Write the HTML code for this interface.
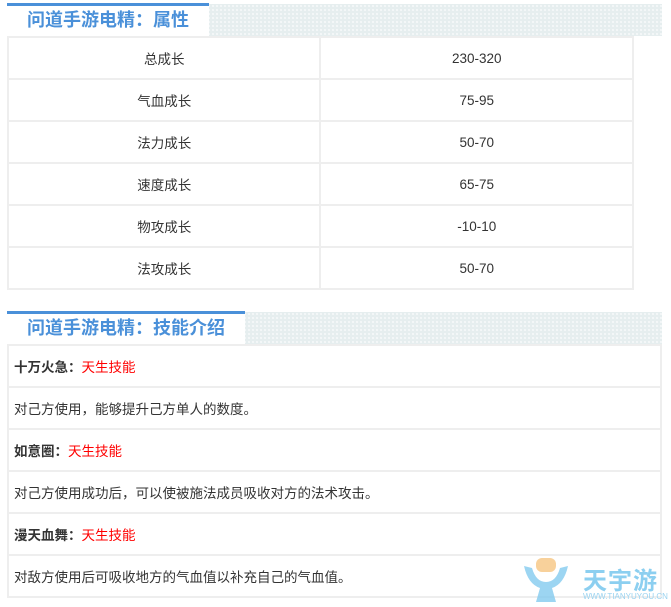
<!DOCTYPE html><html><head><meta charset="utf-8"><style>
body{margin:0;background:#fff;font-family:"Liberation Sans","Noto Sans CJK SC",sans-serif;width:671px;height:604px;overflow:hidden;position:relative}
.band{position:absolute;left:7px;width:655px;height:32px;background-color:#e6eeef;background-image:radial-gradient(circle,#fff 0.7px,transparent 0.9px);background-size:4px 4px}
.tab{position:absolute;left:0;top:-1px;height:33px;background:#fff;border-top:3px solid #4a90d9;box-sizing:border-box;color:#4a90d9;font-weight:bold;font-size:18px;line-height:28px;padding-left:20px}
table{position:absolute;left:7px;border-collapse:collapse;font-size:13.5px;color:#333}
td{border:2px solid #eee;height:40px;padding:0}
.t1 td{text-align:center;width:313px}
.t2 td{padding-left:5px}
b{font-weight:bold}
.r{color:#f00}
</style></head><body>
<div class="band" style="top:4px"><div class="tab" style="width:202px">问道手游电精：属性</div></div>
<table class="t1" style="top:36px;width:627px">
<tr><td>总成长</td><td>230-320</td></tr>
<tr><td>气血成长</td><td>75-95</td></tr>
<tr><td>法力成长</td><td>50-70</td></tr>
<tr><td>速度成长</td><td>65-75</td></tr>
<tr><td>物攻成长</td><td>-10-10</td></tr>
<tr><td>法攻成长</td><td>50-70</td></tr>
</table>
<div class="band" style="top:312px"><div class="tab" style="width:238px">问道手游电精：技能介绍</div></div>
<table class="t2" style="top:344px;width:655px">
<tr><td><b>十万火急：</b><span class="r">天生技能</span></td></tr>
<tr><td>对己方使用，能够提升己方单人的数度。</td></tr>
<tr><td><b>如意圈：</b><span class="r">天生技能</span></td></tr>
<tr><td>对己方使用成功后，可以使被施法成员吸收对方的法术攻击。</td></tr>
<tr><td><b>漫天血舞：</b><span class="r">天生技能</span></td></tr>
<tr><td>对敌方使用后可吸收地方的气血值以补充自己的气血值。</td></tr>
</table>
<div style="position:absolute;left:522px;top:556px;width:48px;height:46px;opacity:.75">
<svg width="48" height="46"><path d="M2 10 Q6 28 18 32 L14 46 L34 46 L30 32 Q42 28 46 10 L38 12 Q34 26 24 26 Q14 26 10 12Z" fill="#7cc8ee"/><rect x="14" y="2" width="20" height="14" rx="6" fill="#f6c27a"/></svg></div>
<div style="position:absolute;left:583px;top:561px;font-size:24px;font-weight:bold;color:#8ccff0;letter-spacing:1px">天宇游</div>
<div style="position:absolute;left:583px;top:592px;font-size:8px;color:#9ad3f0">WWW.TIANYUYOU.CN</div>
</body></html>
